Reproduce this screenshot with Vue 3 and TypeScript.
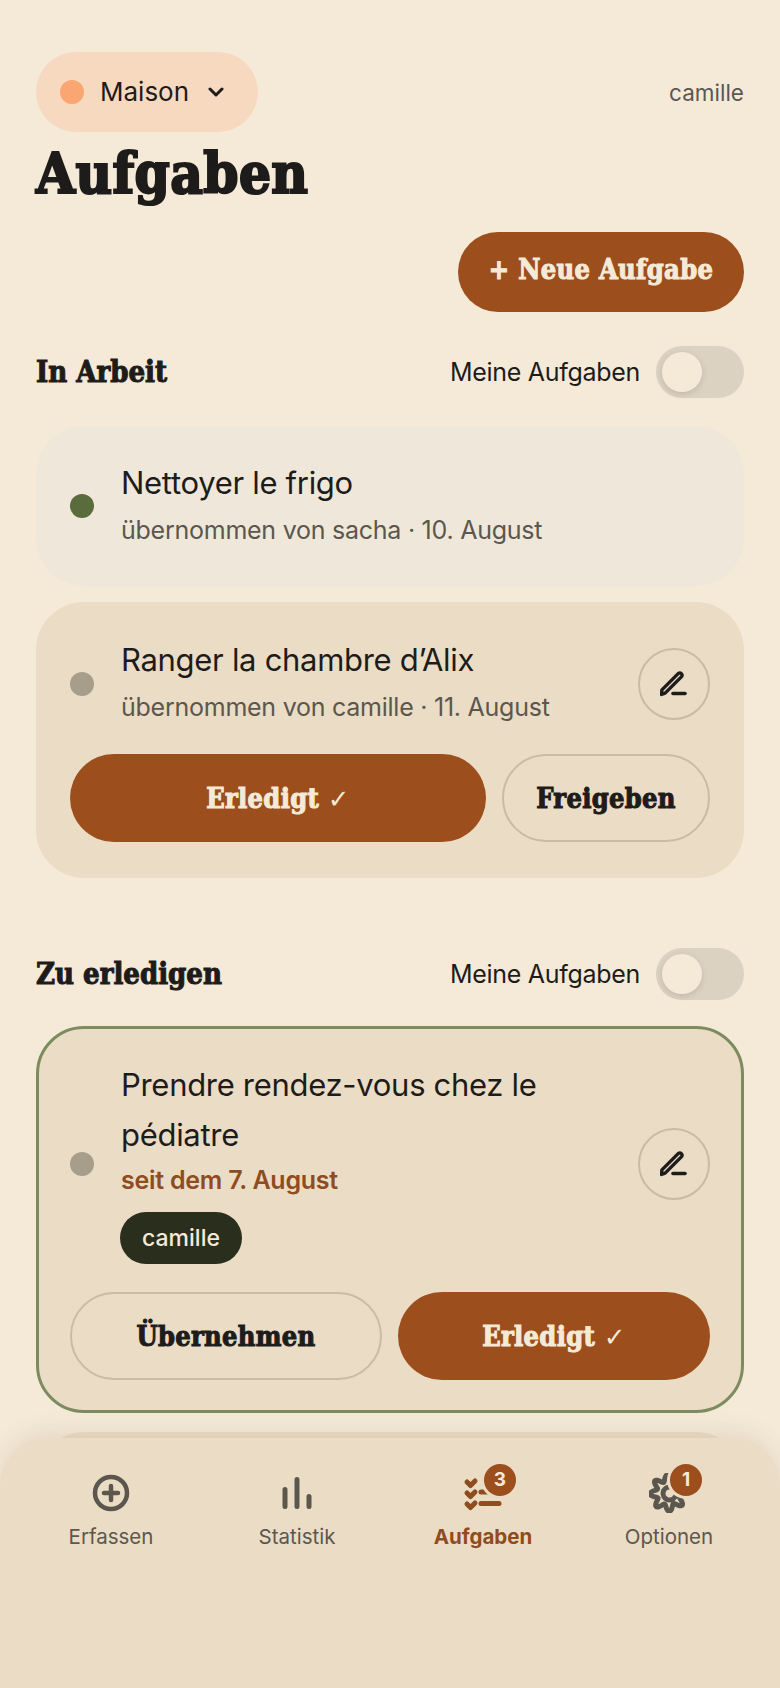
<script setup lang="ts">
const navItems = [
  { label: 'Erfassen', icon: 'add', badge: 0, active: false },
  { label: 'Statistik', icon: 'stats', badge: 0, active: false },
  { label: 'Aufgaben', icon: 'tasks', badge: 3, active: true },
  { label: 'Optionen', icon: 'gear', badge: 1, active: false },
]

// wavy gear outline for the options icon
const gearPath = Array.from({ length: 97 }, (_, i) => {
  const a = (i / 96) * Math.PI * 2
  const r = 15 + 3.4 * Math.cos(a * 8 + 0.4)
  const x = 19.5 + r * Math.cos(a)
  const y = 20 + r * Math.sin(a)
  return `${i ? 'L' : 'M'}${x.toFixed(2)} ${y.toFixed(2)}`
}).join(' ')
</script>

<template>
  <div class="screen">
    <main class="page">
      <header class="top">
        <button class="home-pill">
          <span class="home-dot"></span>
          <span class="home-name">Maison</span>
          <svg class="chevron" viewBox="0 0 16 16" width="16" height="16" fill="none" stroke="currentColor" stroke-width="3" stroke-linecap="round" stroke-linejoin="round">
            <path d="M2 5l6 6 6-6" />
          </svg>
        </button>
        <span class="user">camille</span>
      </header>
      <h1 class="title">Aufgaben</h1>
      <div class="new-row">
        <button class="btn primary new">+ Neue Aufgabe</button>
      </div>

      <section class="section">
        <div class="section-head">
          <h2>In Arbeit</h2>
          <label class="filter">
            <span>Meine Aufgaben</span>
            <span class="toggle"><span class="knob"></span></span>
          </label>
        </div>

        <article class="card faded">
          <div class="task">
            <span class="dot green"></span>
            <div class="task-body">
              <h3>Nettoyer le frigo</h3>
              <p class="meta">übernommen von sacha · 10. August</p>
            </div>
          </div>
        </article>

        <article class="card claimed">
          <div class="task">
            <span class="dot"></span>
            <div class="task-body">
              <h3>Ranger la chambre d’Alix</h3>
              <p class="meta">übernommen von camille · 11. August</p>
            </div>
            <button class="edit" aria-label="Bearbeiten">
              <svg viewBox="0 0 28 28" width="28" height="28" fill="none" stroke="currentColor" stroke-linecap="round" stroke-linejoin="round">
                <path d="M1.500 24.500L1.900 19.900 18.400 3.400a2.300 2.300 0 0 1 3.200 3.200L5.100 23.100z" stroke-width="3.400" />
                <path d="M13 23.500h12" stroke-width="3.600" />
              </svg>
            </button>
          </div>
          <div class="actions wide-first">
            <button class="btn primary">Erledigt <span class="tick">✓</span></button>
            <button class="btn ghost">Freigeben</button>
          </div>
        </article>
      </section>

      <section class="section second">
        <div class="section-head">
          <h2>Zu erledigen</h2>
          <label class="filter">
            <span>Meine Aufgaben</span>
            <span class="toggle"><span class="knob"></span></span>
          </label>
        </div>

        <article class="card outlined">
          <div class="task">
            <span class="dot"></span>
            <div class="task-body">
              <h3 class="long">Prendre rendez-vous chez le pédiatre</h3>
              <p class="meta since">seit dem 7. August</p>
              <span class="chip">camille</span>
            </div>
            <button class="edit" aria-label="Bearbeiten">
              <svg viewBox="0 0 28 28" width="28" height="28" fill="none" stroke="currentColor" stroke-linecap="round" stroke-linejoin="round">
                <path d="M1.500 24.500L1.900 19.900 18.400 3.400a2.300 2.300 0 0 1 3.200 3.200L5.100 23.100z" stroke-width="3.400" />
                <path d="M13 23.500h12" stroke-width="3.600" />
              </svg>
            </button>
          </div>
          <div class="actions">
            <button class="btn ghost">Übernehmen</button>
            <button class="btn primary">Erledigt <span class="tick">✓</span></button>
          </div>
        </article>

        <article class="card next"></article>
      </section>
    </main>

    <nav class="nav">
      <a v-for="item in navItems" :key="item.label" class="nav-item" :class="{ active: item.active }">
        <span class="nav-icon">
          <svg v-if="item.icon === 'add'" viewBox="0 0 40 40" width="40" height="40" fill="none" stroke="currentColor" stroke-linecap="round">
            <circle cx="20" cy="20" r="16" stroke-width="4.500" />
            <path d="M20 13v14M13 20h14" stroke-width="4.500" />
          </svg>
          <svg v-else-if="item.icon === 'stats'" viewBox="0 0 40 40" width="40" height="40" fill="none" stroke="currentColor" stroke-width="5" stroke-linecap="round">
            <path d="M8 16.500v17M20 6.500v27M32 23.500v10" />
          </svg>
          <svg v-else-if="item.icon === 'tasks'" viewBox="0 0 40 40" width="40" height="40" fill="none" stroke="currentColor" stroke-width="5" stroke-linecap="round" stroke-linejoin="round">
            <path d="M4 9l3.500 3.500 4.500-4.500M4 20l3.500 3.500 4.500-4.500M4 31l3.500 3.500 4.500-4.500" />
            <path d="M18 19h18M18 30.500h18" />
          </svg>
          <svg v-else viewBox="0 0 40 40" width="40" height="40" fill="none" stroke="currentColor" stroke-width="5" stroke-linecap="round" stroke-linejoin="round">
            <path :d="gearPath" />
            <path d="M21 14a6.500 6.500 0 1 0 5 10" />
          </svg>
          <span v-if="item.badge" class="badge">{{ item.badge }}</span>
        </span>
        <span class="nav-label">{{ item.label }}</span>
      </a>
    </nav>
  </div>
</template>

<style>
html,
body {
  margin: 0;
  background: #f5ead8;
}
</style>

<style scoped>
.screen {
  position: relative;
  height: 1688px;
  overflow: hidden;
  background: #f5ead8;
  color: #1e1c1a;
  font-family: Inter, 'Noto Sans', sans-serif;
}

.page {
  padding: 52px 36px 0;
}

button {
  font: inherit;
  color: inherit;
  border: 0;
  background: none;
}

.top {
  display: flex;
  justify-content: space-between;
  align-items: center;
}

.home-pill {
  display: flex;
  align-items: center;
  height: 80px;
  width: 222px;
  padding: 0 24px;
  border-radius: 40px;
  background: #f6d9bf;
  font-size: 26px;
}

.home-name {
  position: relative;
  top: -1px;
}

.home-dot {
  width: 24px;
  height: 24px;
  border-radius: 50%;
  background: #f9a672;
  margin-right: 16px;
}

.chevron {
  margin-left: 19px;
}

.user {
  font-size: 22.5px;
  color: #5c574e;
}

.title,
h2,
.btn {
  font-family: 'DejaVu Serif Condensed', 'DejaVu Serif', serif;
  font-weight: 700;
  -webkit-text-stroke: 1px currentColor;
}

.title {
  margin: 0;
  height: 80px;
  font-size: 56px;
  line-height: 82px;
  letter-spacing: 0.4px;
  -webkit-text-stroke-width: 2.2px;
  color: #1e1c1a;
}

.new-row {
  display: flex;
  justify-content: flex-end;
  margin-top: 20px;
}

.btn {
  height: 88px;
  border-radius: 44px;
  font-size: 27px;
  letter-spacing: 0.3px;
  white-space: nowrap;
}

.btn.primary {
  background: #9c4e1c;
  color: #f5ead8;
}

.btn.ghost {
  border: 2px solid #c9bba6;
  color: #1e1c1a;
}

.btn.new {
  width: 286px;
  height: 80px;
  padding-bottom: 6px;
  border-radius: 40px;
}

.tick {
  font-family: 'DejaVu Sans', sans-serif;
  font-weight: 400;
  font-size: 26px;
  -webkit-text-stroke: 0;
}

.section {
  margin-top: 34px;
}

.section.second {
  margin-top: 70px;
}

.section-head {
  display: flex;
  justify-content: space-between;
  align-items: center;
  height: 52px;
  margin-bottom: 28px;
}

.section.second .section-head {
  margin-bottom: 26px;
}

h2 {
  margin: 0;
  font-size: 29px;
}

.filter {
  display: flex;
  align-items: center;
  gap: 16px;
  font-size: 25px;
  letter-spacing: -0.3px;
}

.toggle {
  display: block;
  width: 88px;
  height: 52px;
  padding: 6px;
  box-sizing: border-box;
  border-radius: 26px;
  background: #dcd2c2;
}

.knob {
  display: block;
  width: 40px;
  height: 40px;
  border-radius: 50%;
  background: #f5ead8;
  box-shadow: 0 2px 6px rgba(60, 40, 20, 0.15);
}

.card {
  padding: 33px 34px 36px;
  border-radius: 48px;
  background: #ebdcc5;
  margin-bottom: 16px;
}

.card.faded {
  background: #efe8da;
  height: 160px;
  box-sizing: border-box;
  padding-top: 32px;
}

.card.outlined {
  border: 3px solid #7d8c5f;
  padding: 31px 31px 30px;
  margin-bottom: 19px;
}

.card.next {
  height: 120px;
}

.task {
  display: flex;
  align-items: center;
}

.dot {
  flex: none;
  width: 24px;
  height: 24px;
  border-radius: 50%;
  background: #a69d8a;
  margin-right: 27px;
}

.dot.green {
  background: #5a6b3c;
}

.task-body {
  flex: 1;
  min-width: 0;
}

.faded .task-body {
  padding-bottom: 6px;
}

.claimed .task-body {
  padding-bottom: 8px;
}

.outlined .task-body {
  padding-bottom: 4px;
}

h3 {
  margin: 0;
  font-size: 31px;
  font-weight: 400;
  line-height: 50px;
  letter-spacing: -0.3px;
}

h3.long {
  max-width: 440px;
}

.meta {
  margin: 4px 0 0;
  font-size: 25px;
  line-height: 36px;
  letter-spacing: -0.25px;
  color: #5c574e;
}

.meta.since {
  margin-top: 2px;
  color: #8f4c1e;
  font-weight: 600;
}

.chip {
  display: inline-block;
  margin: 14px 0 0 -1px;
  width: 122px;
  text-align: center;
  height: 52px;
  line-height: 52px;
  border-radius: 26px;
  background: #2a2e1c;
  color: #f5ead8;
  font-size: 23px;
  font-weight: 500;
}

.edit {
  flex: none;
  display: flex;
  align-items: center;
  justify-content: center;
  width: 72px;
  height: 72px;
  padding: 0;
  border-radius: 50%;
  border: 2px solid #c9bba6;
  color: #1e1c1a;
}

.actions {
  display: grid;
  grid-template-columns: 1fr 1fr;
  gap: 16px;
  margin-top: 21px;
}

.actions.wide-first {
  grid-template-columns: 416px 208px;
}

.card.outlined .actions {
  margin-top: 24px;
}

.nav {
  position: absolute;
  left: 0;
  right: 0;
  bottom: 0;
  height: 250px;
  display: grid;
  grid-template-columns: repeat(4, 186px);
  padding: 0 18px;
  box-sizing: border-box;
  border-radius: 48px 48px 0 0;
  background: #ebdcc5;
  box-shadow: 0 -6px 24px rgba(90, 60, 30, 0.1);
}

.nav-item {
  display: flex;
  flex-direction: column;
  align-items: center;
  padding-top: 35px;
  color: #5c574e;
  text-decoration: none;
}

.nav-item.active {
  color: #8f4c1e;
  font-weight: 700;
}

.nav-icon {
  position: relative;
  display: block;
  width: 40px;
  height: 40px;
}

.nav-label {
  margin-top: 11px;
  font-size: 20.5px;
}

.badge {
  position: absolute;
  top: -9px;
  left: 21px;
  width: 32px;
  height: 32px;
  border-radius: 50%;
  background: #9c4e1c;
  color: #f5ead8;
  font-size: 19px;
  font-weight: 700;
  line-height: 32px;
  text-align: center;
  box-shadow: 0 0 0 3px #ebdcc5;
}
</style>
